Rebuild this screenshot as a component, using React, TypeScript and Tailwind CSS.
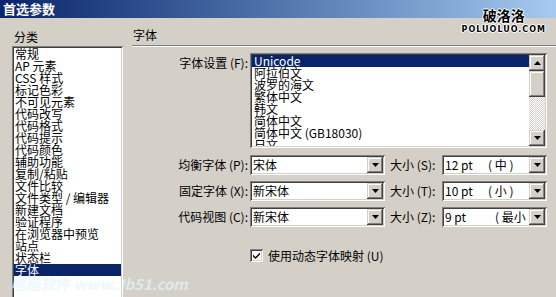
import React from "react";

const raised =
  "bg-[#d4d0c8] shadow-[inset_-1px_-1px_#404040,inset_1px_1px_#d4d0c8,inset_-2px_-2px_#808080,inset_2px_2px_#ffffff]";
const sunken =
  "bg-white p-[2px] shadow-[inset_1px_1px_#808080,inset_-1px_-1px_#ffffff,inset_2px_2px_#404040,inset_-2px_-2px_#d4d0c8]";

const categories = [
  "常规",
  "AP 元素",
  "CSS 样式",
  "标记色彩",
  "不可见元素",
  "代码改写",
  "代码格式",
  "代码提示",
  "代码颜色",
  "辅助功能",
  "复制/粘贴",
  "文件比较",
  "文件类型 / 编辑器",
  "新建文档",
  "验证程序",
  "在浏览器中预览",
  "站点",
  "状态栏",
  "字体",
];

const encodings = [
  "Unicode",
  "阿拉伯文",
  "波罗的海文",
  "繁体中文",
  "韩文",
  "简体中文",
  "简体中文 (GB18030)",
  "日文",
];

function Arrow({ down }: { down?: boolean }) {
  return (
    <svg width="7" height="4" viewBox="0 0 7 4">
      <path d={down ? "M0 0H7L3.5 4Z" : "M0 4H7L3.5 0Z"} fill="#000" />
    </svg>
  );
}

function ArrowButton({ down = true }: { down?: boolean }) {
  return (
    <div className={`flex h-4 w-4 shrink-0 items-center justify-center ${raised}`}>
      <Arrow down={down} />
    </div>
  );
}

function Combo({ value, width }: { value: React.ReactNode; width: string }) {
  return (
    <div className={`flex h-[20px] ${width} ${sunken}`}>
      <div className="flex flex-1 overflow-hidden whitespace-pre pl-[1px] pt-[2px] leading-[12px]">{value}</div>
      <ArrowButton />
    </div>
  );
}

function Size({ pt, name, gap }: { pt: string; name: string; gap: string }) {
  return (
    <>
      <span className="w-[28px] shrink-0">{pt}</span>
      <span className={`shrink-0 ${gap}`}>( {name} )</span>
    </>
  );
}

function Label({ children }: { children: React.ReactNode }) {
  return <div className="w-[120px] shrink-0 pr-[2px] text-right leading-[12px]">{children}</div>;
}

function FontRow({ label, font, sizeLabel, size }: { label: string; font: string; sizeLabel: string; size: React.ReactNode }) {
  return (
    <div className="flex items-center">
      <Label>{label}</Label>
      <Combo value={font} width="w-[135px]" />
      <div className="w-[57px] shrink-0 pl-[5px] leading-[12px]">{sizeLabel}</div>
      <Combo value={size} width="w-[105px]" />
    </div>
  );
}

export default function App() {
  return (
    <div className="relative h-[297px] w-[556px] overflow-hidden bg-[#d4d0c8] font-['Noto_Sans_CJK_SC',sans-serif] text-[12px] text-black">
      <div className="flex h-[18px] items-center bg-gradient-to-r from-[#0a246a] to-[#a6caf0] pl-[3px] text-[13px] font-bold text-white">
        首选参数
      </div>

      <div className="flex">
        <div className="w-[130px] shrink-0 pl-[12px] pt-[13px]">
          <div className="pl-[2px] leading-[12px]">分类</div>
          <div className={`mt-[3px] h-[260px] w-[111px] ${sunken}`}>
            {categories.map((c) => (
              <div
                key={c}
                className={`h-[12px] whitespace-pre pl-[1px] leading-[12px] ${c === "字体" ? "bg-[#0a246a] text-white" : ""}`}
              >
                {c}
              </div>
            ))}
          </div>
        </div>

        <div className="flex-1 pt-[11px]">
          <div className="pl-[3px] leading-[12px]">字体</div>
          <div className="ml-[2px] mt-[4px] h-[2px] border-t border-b border-t-[#808080] border-b-white" />

          <div className="mt-[6px] flex items-start">
            <Label>
              <div className="pt-[4px]">字体设置 (F):</div>
            </Label>
            <div className={`flex h-[95px] w-[297px] ${sunken}`}>
              <div className="flex-1 overflow-hidden">
                {encodings.map((e, i) => (
                  <div
                    key={e}
                    className={`h-[12px] whitespace-pre pl-[2px] leading-[12px] ${i === 0 ? "bg-[#0a246a] text-white" : ""}`}
                  >
                    {e}
                  </div>
                ))}
              </div>
              <div className="flex w-4 flex-col">
                <ArrowButton down={false} />
                <div className={`h-[26px] ${raised}`} />
                <div className="flex-1 bg-[repeating-conic-gradient(#d4d0c8_0%_25%,#ffffff_0%_50%)] bg-[length:2px_2px]" />
                <ArrowButton />
              </div>
            </div>
          </div>

          <div className="mt-[7px] flex flex-col gap-[6px]">
            <FontRow label="均衡字体 (P):" font="宋体" sizeLabel="大小 (S):" size={<Size pt="12 pt" name="中" gap="ml-[15px]" />} />
            <FontRow label="固定字体 (X):" font="新宋体" sizeLabel="大小 (T):" size={<Size pt="10 pt" name="小" gap="ml-[15px]" />} />
            <FontRow label="代码视图 (C):" font="新宋体" sizeLabel="大小 (Z):" size={<Size pt="9 pt" name="最小" gap="ml-[22px]" />} />
          </div>

          <div className="mt-[22px] flex items-center pl-[120px]">
            <div className={`flex h-[13px] w-[13px] items-center justify-center ${sunken} p-0`}>
              <svg width="7" height="7" viewBox="0 0 7 7">
                <path d="M0 2.5L2.5 5L7 0.5V2.5L2.5 7L0 4.5Z" fill="#000" />
              </svg>
            </div>
            <div className="pl-[5px] leading-[12px]">使用动态字体映射 (U)</div>
          </div>
        </div>
      </div>

      <div className="absolute right-[10px] top-[8px] flex flex-col items-center">
        <div className="text-[14px] font-bold leading-[15px] text-black [text-shadow:1px_0_#fff,-1px_0_#fff,0_1px_#fff,0_-1px_#fff]">
          破洛洛
        </div>
        <div className="mt-[3px] font-['DejaVu_Sans',sans-serif] text-[8px] font-bold leading-[8px] tracking-[1px] text-black [text-shadow:1px_0_#fff,-1px_0_#fff,0_1px_#fff,0_-1px_#fff]">
          POLUOLUO.COM
        </div>
      </div>

      <div className="absolute left-[10px] top-[276px] text-[15px] font-bold italic leading-[16px] text-[#e6f6ff] opacity-70">
        电脑软件 www.Jb51.com
      </div>
    </div>
  );
}
